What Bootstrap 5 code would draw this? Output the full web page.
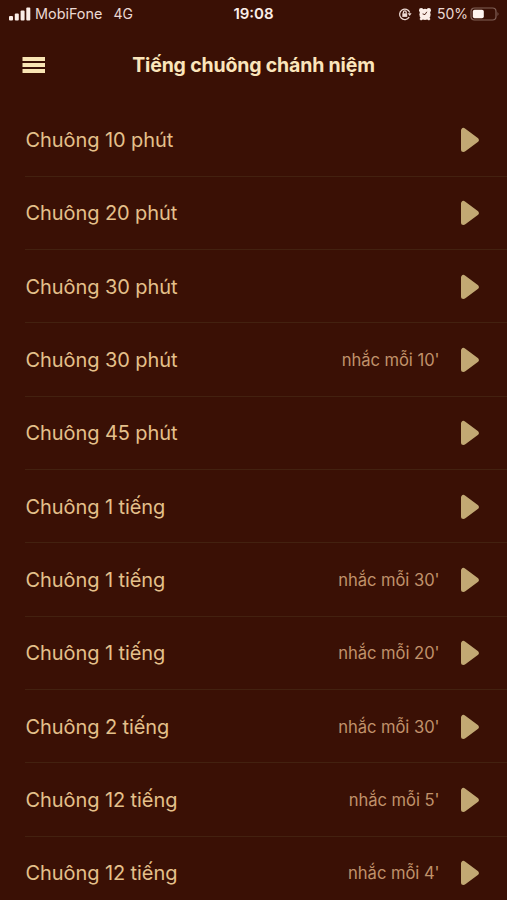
<!DOCTYPE html>
<html lang="vi">
<head>
<meta charset="utf-8">
<meta name="viewport" content="width=device-width, initial-scale=1">
<title>Tiếng chuông chánh niệm</title>
<link href="https://cdn.jsdelivr.net/npm/bootstrap@5.3.0/dist/css/bootstrap.min.css" rel="stylesheet">
<style>
body{background:#3a1005;font-family:Inter,"Liberation Sans",sans-serif;height:900px;overflow:hidden}
svg{display:block;flex:none}
.status{height:28px;padding:0 7px 0 9px;color:#ecd9d3;font-size:14px;line-height:28px}
.status-side{flex:1 1 0}
.carrier{font-size:14.4px}
.network{margin-left:11px}
.alarm{margin:0 5px 0 6px}
.percent{margin-right:2px}
.clock{font-weight:600;color:#fbeee8;font-size:15px;margin-right:2px}
.title-bar{height:73.3px;padding:0 22px}
.title-bar h1{font-size:19.5px;letter-spacing:-.17px;font-weight:650;color:#fbe5bb;line-height:24px}
.menu-btn,.play-btn{border:0}
.side{width:24px}
.bells{padding:2.3px 0 0 25px}
.bell{height:73.3px;border-bottom:1.5px solid #432110;padding:.8px 27px 0 0}
.bell-name{font-size:20px;letter-spacing:-.08px;color:#e4c08b;padding-left:.5px}
.bell-note{font-size:16.6px;letter-spacing:-.05px;color:#c0926b;margin-right:20.5px;padding-top:1px}
</style>
<script src="https://cdn.jsdelivr.net/npm/bootstrap@5.3.0/dist/js/bootstrap.bundle.min.js"></script>
</head>
<body>
<svg width="0" height="0" class="position-absolute"><defs><symbol id="play" viewBox="0 0 20 26"><path d="M3.5 3.5V22.5L16.3 13Z" fill="#c2a873" stroke="#c2a873" stroke-width="5" stroke-linejoin="round"/></symbol></defs></svg>
<header>
<div class="status d-flex align-items-center text-nowrap">
<div class="status-side d-flex align-items-center">
<svg width="22" height="14" viewBox="0 0 22 14" fill="#fbeee8"><rect x="0" y="9" width="4" height="4.5" rx="1"/><rect x="5.8" y="6.5" width="4" height="7" rx="1"/><rect x="11.6" y="3.5" width="4" height="10" rx="1"/><rect x="17.3" y="0.5" width="4" height="13" rx="1"/></svg>
<span class="carrier ms-1">MobiFone</span><span class="network">4G</span>
</div>
<span class="clock">19:08</span>
<div class="status-side d-flex align-items-center justify-content-end">
<svg width="14" height="14" viewBox="0 0 14 14" fill="none" stroke="#ecd9d3" stroke-width="1.3"><path d="M11.2 10.2A5.2 5.2 0 1 1 11.7 5.5"/><path d="M9.6 6.2H13.6L11.7 9Z" fill="#ecd9d3" stroke="none"/><rect x="4.3" y="6.3" width="4.9" height="3.6" fill="#ecd9d3" stroke="none"/><path d="M5.4 6.5V5.2a1.4 1.4 0 0 1 2.8 0V6.5"/></svg>
<svg class="alarm" width="14" height="14" viewBox="0 0 14 14"><g fill="#fbeee8"><circle cx="7" cy="7.4" r="5.6"/><circle cx="3.2" cy="3.2" r="2.2"/><circle cx="10.8" cy="3.2" r="2.2"/><path d="M1.5 12L3.5 9.5L5.5 12L3 13.5ZM12.5 12L10.5 9.5L8.5 12L11 13.5Z"/></g><path d="M8.8 4.8L7 7.6L4.6 6.9" fill="none" stroke="#3a1005" stroke-width=".9"/></svg>
<span class="percent">50%</span>
<svg width="30" height="14" viewBox="0 0 30 14"><rect x="1" y="1" width="25" height="12" rx="3.5" fill="none" stroke="#806057" stroke-width="1.2"/><rect x="2.8" y="2.8" width="11" height="8.4" rx="1.8" fill="#fff5f0"/><path d="M27.5 5Q29.5 7 27.5 9Z" fill="#806057"/></svg>
</div>
</div>
<div class="title-bar d-flex align-items-center justify-content-between">
<button class="menu-btn side bg-transparent p-0" aria-label="Menu"><svg width="24" height="18" viewBox="0 0 24 18" fill="#f8e4b4"><path d="M.5 1h22.5v4H.5ZM.5 7h22.5v4H.5ZM.5 13h22.5v4H.5Z"/></svg></button>
<h1 class="m-0">Tiếng chuông chánh niệm</h1>
<span class="side"></span>
</div>
</header>
<main class="bells" id="bells"></main>
<script>
const bells = [["Chuông 10 phút"],["Chuông 20 phút"],["Chuông 30 phút"],["Chuông 30 phút","nhắc mỗi 10'"],["Chuông 45 phút"],["Chuông 1 tiếng"],["Chuông 1 tiếng","nhắc mỗi 30'"],["Chuông 1 tiếng","nhắc mỗi 20'"],["Chuông 2 tiếng","nhắc mỗi 30'"],["Chuông 12 tiếng","nhắc mỗi 5'"],["Chuông 12 tiếng","nhắc mỗi 4'"]];
document.getElementById("bells").innerHTML = bells.map(([name, note = ""]) =>
`<div class="bell d-flex align-items-center"><span class="bell-name">${name}</span><span class="bell-note ms-auto">${note}</span><button class="play-btn bg-transparent p-0" aria-label="Play"><svg width="20" height="26"><use href="#play"/></svg></button></div>`).join("");
</script>
</body>
</html>
